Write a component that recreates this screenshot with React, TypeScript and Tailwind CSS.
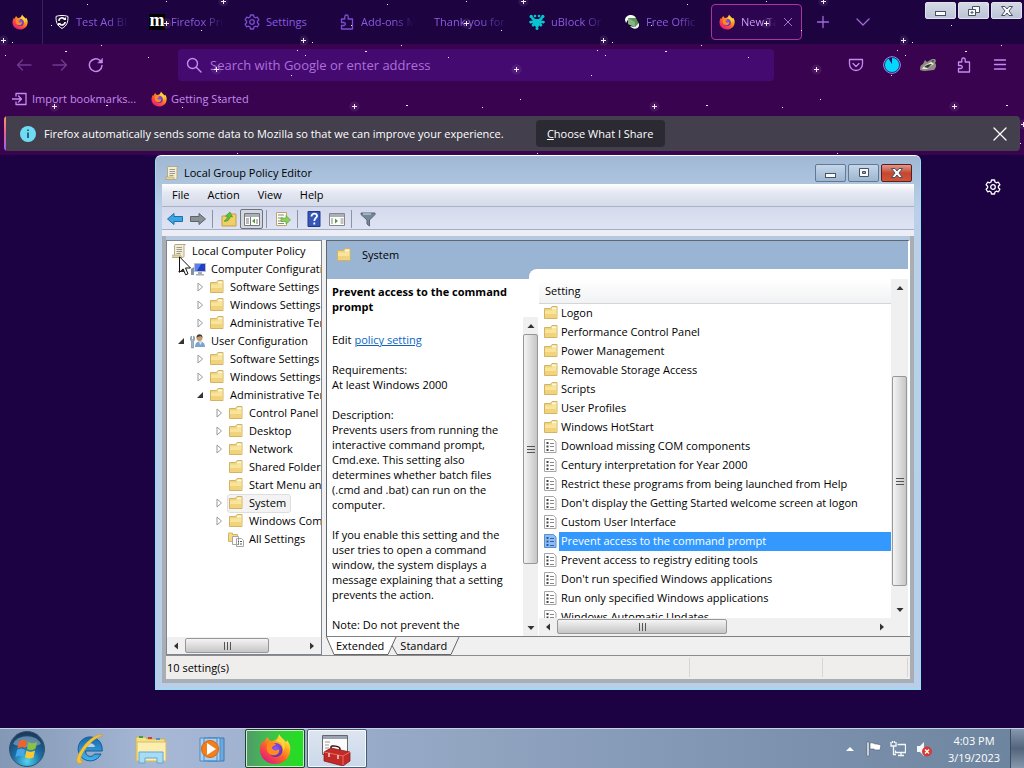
import type { ReactNode } from "react";

/* ---------- Browser icons ---------- */

function FirefoxIcon({ className }: { className: string }) {
  return (
    <svg viewBox="0 0 32 32" className={className} aria-hidden="true">
      <defs>
        <linearGradient id="fx-body" x1="0.85" y1="0.1" x2="0.2" y2="0.95">
          <stop offset="0" stopColor="#fff44f" />
          <stop offset="0.3" stopColor="#ffa41c" />
          <stop offset="0.6" stopColor="#ff5a2c" />
          <stop offset="1" stopColor="#e31587" />
        </linearGradient>
        <radialGradient id="fx-core" cx="0.5" cy="0.4" r="0.6">
          <stop offset="0" stopColor="#9059ff" />
          <stop offset="1" stopColor="#5b2fb5" />
        </radialGradient>
      </defs>
      <path d="M20 1c1 3 5 5 7 8 1 0 1-2 1-2 3 4 4 8 3 12-1 7-7 12-15 12S1 25 1 17c0-4 1-7 3-9l1 2c1-3 2-5 4-6 0 2 1 3 3 4 4 0 7-2 8-7z" fill="url(#fx-body)" />
      <circle cx="16.500" cy="17" r="7" fill="url(#fx-core)" />
      <path d="M9 10c3-2 5 0 8 1-1 2-4 2-4 4 1 3 5 3 7 1 1 5-3 7-7 6-5-1-7-7-4-12z" fill="#ff8a1f" />
      <path d="M17 8c5 1 8 5 7 10 3-3 2-9-1-12-2-1-4 0-6 2z" fill="#ffd23e" />
    </svg>
  );
}

type LineProps = { className: string; children: ReactNode; width?: number };

function Line({ className, children, width = 1.3 }: LineProps) {
  return (
    <svg viewBox="0 0 16 16" fill="none" stroke="currentColor" strokeWidth={width} strokeLinecap="round" strokeLinejoin="round" className={className} aria-hidden="true">
      {children}
    </svg>
  );
}

function GearIcon({ className }: { className: string }) {
  return (
    <Line className={className}>
      <path d="M6.500 1h3l.5 2 1.400.8 2-.6 1.500 2.600-1.500 1.500v1.500l1.500 1.400-1.500 2.600-2-.6-1.400.8-.5 2h-3L6 13l-1.400-.8-2 .6-1.500-2.600 1.500-1.400V7.200L1.100 5.800l1.500-2.600 2 .6L6 3z" />
      <circle cx="8" cy="8" r="2.300" />
    </Line>
  );
}

function PuzzleIcon({ className }: { className: string }) {
  return (
    <Line className={className}>
      <path d="M2.500 5h3.300V2.700a1.700 1.700 0 0 1 3.400 0V5h4.300v10h-11v-3.500h2.300a1.500 1.500 0 0 0 0-3H2.500z" />
    </Line>
  );
}

function CloseIcon({ className }: { className: string }) {
  return (
    <Line className={className}>
      <path d="M2 2l12 12M14 2L2 14" />
    </Line>
  );
}

function ShieldIcon() {
  return (
    <svg viewBox="0 0 16 16" className="size-4" aria-hidden="true">
      <path d="M8 1.500c3 0 5 .5 6 1 0 6-1 9-6 12-5-3-6-6-6-12 1-.5 3-1 6-1z" fill="#1d0b33" stroke="#fff" />
      <path d="M4.800 6.800a3.300 3.300 0 0 1 5.800-1.800M11.200 8a3.300 3.300 0 0 1-5.800 1.800" fill="none" stroke="#fff" strokeWidth="1.700" />
      <path d="M12 3v3H9zM4 12V9h3z" fill="#fff" />
    </svg>
  );
}

function MozillaIcon() {
  return (
    <span className="flex size-4 shrink-0 items-center justify-center bg-black font-['Liberation_Serif',serif] text-lg font-bold leading-none text-white">
      <span className="pb-1">m</span>
    </span>
  );
}

function UblockIcon() {
  return (
    <svg viewBox="0 0 16 16" className="size-4" fill="#08c4cf" aria-hidden="true">
      <path d="M5 3.500L6 5h4l1-1.500 2-.5 1 2-2 1.500 3 .5v2.500l-3-.5 1.500 2L12 13l-1.500-1.500L8 14.500 5.500 11.500 4 13l-1.500-2L4 9l-3 .5V7l3-.5L2 5l1-2z" />
      <circle cx="2.200" cy="2.500" r="1.700" />
      <circle cx="13.800" cy="2.500" r="1.700" />
      <circle cx="6" cy="2" r="1.300" />
      <circle cx="10" cy="2" r="1.300" />
      <circle cx="1.500" cy="8" r="1.300" />
      <circle cx="14.500" cy="8" r="1.300" />
      <circle cx="8" cy="14.500" r="1.500" />
    </svg>
  );
}

function OfficeIcon() {
  return (
    <svg viewBox="0 0 16 16" className="size-4" aria-hidden="true">
      <path d="M1 6c0-3 3-5 6-5 2 0 4 1 5 3L5 4 2 9z" fill="#f5fff5" />
      <path d="M4 4l8 0 3 6-4 3-7-3z" fill="#5b9457" />
      <path d="M4 4l7 4 0 5-7-3z" fill="#86b57f" />
      <path d="M6 12l5 1 4-4v3c-1 3-6 4-9 0z" fill="#f0faee" />
    </svg>
  );
}

const starPoints: [number, number, "dot" | "dash" | "plus"][] = [
  [87, 4, "dot"], [166, 1, "dot"], [223, 1, "plus"], [3, 40, "plus"], [12, 42, "dot"],
  [51, 25, "dot"], [201, 30, "dot"], [166, 23, "plus"], [101, 45, "dot"], [5, 55, "dot"],
  [65, 51, "dash"], [148, 57, "dot"], [297, 50, "dot"], [291, 75, "dot"], [216, 69, "plus"],
  [54, 106, "plus"], [106, 105, "dash"], [182, 107, "dot"], [220, 99, "dot"], [237, 153, "dot"],
  [123, 124, "plus"], [120, 143, "dot"],
];

function StarField() {
  return (
    <svg className="pointer-events-none absolute inset-0 size-full" aria-hidden="true">
      <defs>
        <pattern id="stars" width="300" height="160" patternUnits="userSpaceOnUse">
          {starPoints.map(([x, y, kind]) => (
            <g key={`${x}-${y}`} fill="#f6e8ff">
              {kind === "plus" && <circle cx={x + 0.5} cy={y + 0.5} r="5" opacity="0.08" />}
              {kind === "plus" && <path d={`M${x - 2} ${y}h5v1h-5zM${x} ${y - 2}h1v5h-1z`} />}
              {kind === "dot" && <rect x={x} y={y} width="1" height="1" />}
              {kind === "dash" && <rect x={x} y={y} width="2" height="1" />}
            </g>
          ))}
        </pattern>
      </defs>
      <rect width="100%" height="100%" fill="url(#stars)" />
    </svg>
  );
}

/* ---------- Browser ---------- */

const tabs: { label: string; icon: ReactNode }[] = [
  { label: "Test Ad Bl", icon: <ShieldIcon /> },
  { label: "Firefox Pri", icon: <MozillaIcon /> },
  { label: "Settings", icon: <GearIcon className="size-4 text-[#7a4fd0]" /> },
  { label: "Add-ons M", icon: <PuzzleIcon className="size-4 text-[#7a4fd0]" /> },
  { label: "Thank you for", icon: null },
  { label: "uBlock Or", icon: <UblockIcon /> },
  { label: "Free Offic", icon: <OfficeIcon /> },
];

function CaptionGlyph({ kind, className }: { kind: "min" | "restore" | "max" | "close"; className: string }) {
  return (
    <svg viewBox="0 0 14 12" className={className} fill="#f8fafc" stroke="#475161" aria-hidden="true">
      {kind === "min" && <rect x="1.500" y="6.500" width="10" height="4" />}
      {kind === "restore" && (
        <>
          <path d="M5.500 1.500h7v6h-7z" />
          <path d="M1.500 4.500h7v6h-7z" />
          <path d="M4 7h2v1H4z" />
        </>
      )}
      {kind === "max" && (
        <>
          <path d="M2.500 1.500h9v8h-9z" />
          <path d="M5.500 4.500h3v2h-3z" fill="#8fa9c8" />
        </>
      )}
      {kind === "close" && <path d="M1.500 1.500h3.500L7 4l2-2.500h3.500L9 6l3.500 4.500H9L7 8l-2 2.500H1.500L5 6z" />}
    </svg>
  );
}

function BrowserHeader() {
  const navButton = "flex w-9 items-center justify-center";
  return (
    <header className="relative bg-[#39034f] text-[#c48cf0]">
      <div className="flex h-11 bg-[#1e0341]">
        <button aria-label="Pinned tab" className="flex w-[43px] shrink-0 items-center justify-center border-r border-[#3a2060] pr-0.5">
          <FirefoxIcon className="size-4" />
        </button>
        <div className="flex pl-[3px]" role="tablist">
          {tabs.map((tab) => (
            <button key={tab.label} role="tab" aria-selected="false" className="flex w-[95px] items-center gap-1.5 overflow-hidden pl-2 pr-3 text-[#8a5be0]">
              {tab.icon}
              <span className={`min-w-0 flex-1 overflow-hidden whitespace-nowrap text-left ${tab.label === "Settings" ? "" : "[mask-image:linear-gradient(to_right,black_60%,transparent)]"}`}>
                {tab.label}
              </span>
            </button>
          ))}
          <div className="my-1 flex w-[91px] items-center gap-1.5 rounded border border-[#a8369c] bg-[#2c0450] pl-[7px] pr-1">
            <FirefoxIcon className="size-4 shrink-0" />
            <button role="tab" aria-selected="true" className="w-9 shrink-0 overflow-hidden whitespace-nowrap text-left text-[#c99af5] [mask-image:linear-gradient(to_right,black_55%,transparent)]">
              New Tab
            </button>
            <button aria-label="Close tab" className="text-[#c48cf0]">
              <CloseIcon className="size-2.5" />
            </button>
          </div>
          <button aria-label="New tab" className="ml-px flex w-10 items-center justify-center text-[#a06ad8]">
            <Line className="size-4">
              <path d="M2.500 8h11M8 2.500v11" />
            </Line>
          </button>
          <button aria-label="List all tabs" className="flex w-10 items-center justify-center text-[#a06ad8]">
            <Line className="size-4">
              <path d="M2 5l6 6 6-6" />
            </Line>
          </button>
        </div>
        <div className="ml-auto flex gap-0.5 pr-0.5 pt-0.5">
          {(["min", "restore", "close"] as const).map((kind) => (
            <button key={kind} aria-label={kind} className="flex h-[17px] w-[31px] items-center justify-center rounded-xs border border-[#dfe3ec] bg-linear-to-b from-[#d3d8e4] to-[#bcc5d6]">
              <CaptionGlyph kind={kind} className="h-3 w-3.5" />
            </button>
          ))}
        </div>
      </div>

      <div className="flex h-[42px] items-center pl-1.5">
        <button aria-label="Back" className={`${navButton} text-[#6f3a92]`}>
          <Line className="size-4">
            <path d="M15 8H1.500M6.500 3l-5 5 5 5" />
          </Line>
        </button>
        <button aria-label="Forward" className={`${navButton} text-[#6f3a92]`}>
          <Line className="size-4">
            <path d="M1 8h13.500M9.500 3l5 5-5 5" />
          </Line>
        </button>
        <button aria-label="Reload" className={navButton}>
          <Line className="size-4" width={1.5}>
            <path d="M14 8.500A6.300 6.300 0 1 1 12 3.500L13.500 5" />
            <path d="M14.500 1.500V6H10z" fill="currentColor" strokeWidth="0.500" />
          </Line>
        </button>
        <label className="ml-16 flex h-8 flex-1 items-center gap-2 rounded bg-[#440a70] pl-2">
          <Line className="size-4 shrink-0" width={1.4}>
            <circle cx="6.500" cy="6.500" r="5" />
            <path d="M10.500 10.500l4.500 4.500" />
          </Line>
          <input aria-label="Address" placeholder="Search with Google or enter address" className="min-w-0 flex-1 bg-transparent text-[13px] outline-none placeholder:text-[#ad6fdc]" />
        </label>
        <div className="ml-16 flex pr-1.5">
          <button aria-label="Save to Pocket" className={navButton}>
            <Line className="size-4">
              <path d="M1.500 2.500h13v4.500a6.500 6.500 0 0 1-13 0z" />
              <path d="M5 6.500l3 3 3-3" />
            </Line>
          </button>
          <button aria-label="Privacy extension" className={navButton}>
            <svg viewBox="0 0 18 18" className="size-[18px]" aria-hidden="true">
              <circle cx="9" cy="9" r="8.300" fill="#04d7fb" stroke="#b18cf0" />
              <circle cx="9" cy="9" r="7.500" fill="none" stroke="#1c1260" strokeWidth="0.800" />
              <path d="M9 8L5.500 2.500 9 1.500z" fill="#1c1260" />
            </svg>
          </button>
          <button aria-label="Privacy Badger" className={navButton}>
            <svg viewBox="0 0 18 16" className="h-4 w-[18px]" aria-hidden="true">
              <path d="M1 13c0-4 1-5 3-6l2-4 2 2 5-3 3 0 1 2-1 2c2 2 1 5-1 7-5 0-9 2-14 0z" fill="#8f8d83" />
              <path d="M3 12c2-4 6-5 9-7l3 2c-3 2-5 3-7 5z" fill="#e9e7da" />
              <path d="M5 10c2-2 5-3 8-3l-4 4z" fill="#333" />
              <path d="M12 4l3-1-1 2z" fill="#333" />
            </svg>
          </button>
          <button aria-label="Extensions" className={navButton}>
            <PuzzleIcon className="size-4" />
          </button>
          <button aria-label="Menu" className={navButton}>
            <Line className="size-4">
              <path d="M2.500 3h11M2.500 7.500h11M2.500 12h11" />
            </Line>
          </button>
        </div>
      </div>

      <div className="flex h-[30px] items-start gap-3 pl-3 pt-1">
        <button className="flex items-center gap-1 pt-px">
          <Line className="size-4">
            <path d="M0 8h9M6.500 5L9.500 8l-3 3M4 5V2.500h10v11H4V11" />
          </Line>
          <span className="w-[107px] whitespace-nowrap text-left">Import bookmarks...</span>
        </button>
        <button className="flex items-center gap-1 pt-px">
          <FirefoxIcon className="size-4" />
          Getting Started
        </button>
      </div>
      <StarField />
      <div className="relative mx-1 flex h-[35px] items-center overflow-hidden rounded bg-[#433f4c] text-white">
        <span className="h-full w-0.5 bg-linear-to-b from-[#ff9a5a] via-[#e0609a] to-[#9a5cf0]" />
        <svg viewBox="0 0 16 16" className="ml-3.5 size-4 shrink-0" aria-hidden="true">
          <circle cx="8" cy="8" r="8" fill="#6fdcf5" />
          <path d="M7.200 3.500h1.600v1.600H7.200zM7.200 6.500h1.600v5.500H7.200z" fill="#274456" />
        </svg>
        <p className="ml-2 whitespace-nowrap">Firefox automatically sends some data to Mozilla so that we can improve your experience.</p>
        <button className="ml-8 h-[27px] w-[129px] rounded bg-[#2b2a33] whitespace-nowrap">
          <u>C</u>hoose What I Share
        </button>
        <button aria-label="Dismiss" className="ml-auto mr-3">
          <CloseIcon className="size-4" />
        </button>
      </div>
      <div className="h-1" />
    </header>
  );
}

/* ---------- Policy editor icons ---------- */

function FolderIcon() {
  return (
    <svg viewBox="0 0 16 16" className="size-4 shrink-0" aria-hidden="true">
      <path d="M1.500 3.500h6l1.500-2h5v12h-12.500z" fill="#efd57d" stroke="#d4b366" />
      <path d="M9 2.500h4.500v2H9z" fill="#fdf8e0" />
      <path d="M2 5.500h7l1-1h3.500V13H2z" fill="#f8e49a" />
      <path d="M2 9h11.500v4H2z" fill="#f0d37a" />
    </svg>
  );
}

function PolicyIcon({ selected = false }: { selected?: boolean }) {
  return (
    <svg viewBox="0 0 14 16" className="h-4 w-3.5 shrink-0" aria-hidden="true">
      <path d="M1.500 1.500h9l2.500 2.500v10.500H1.500z" fill={selected ? "#8dbdf2" : "#fff"} stroke={selected ? "#5a8fce" : "#a5a5a5"} />
      <path d="M3.500 4h2v2h-2zM3.500 7.500h2v2h-2zM3.500 11h2v2h-2z" fill={selected ? "#24599b" : "#444"} />
      <path d="M7 5.500h4M7 8.500h4M7 12.500h4" stroke={selected ? "#2f65a8" : "#888"} />
    </svg>
  );
}

function ScrollIcon() {
  return (
    <svg viewBox="0 0 16 16" className="size-4 shrink-0" aria-hidden="true">
      <path d="M4 1.500h10.500c-1 0-1.500 1-1.500 2v9c0 1.500-.5 2-1.500 2H1.500c1 0 2-1 2-2V3z" fill="#f5edcf" stroke="#b5aa88" />
      <path d="M1.500 12h8l1.500 2.500H2z" fill="#e3d5a4" stroke="#a69a77" strokeWidth="0.600" />
      <path d="M5.500 4.500h5.500M5.500 6.500h5.500M5.500 8.500h5.500M5.500 10.500h4" stroke="#9a9a9a" />
    </svg>
  );
}

function ComputerIcon() {
  return (
    <svg viewBox="0 0 16 16" className="size-4 shrink-0" aria-hidden="true">
      <path d="M4.500 2.500h11v8h-11z" fill="#1f3fc4" stroke="#b9bfca" />
      <path d="M5 3h6L7 10H5z" fill="#5d7ff0" />
      <path d="M8 11h4v2H8zM6 13h8v1.500H6z" fill="#a7adb8" />
      <path d="M1 8l3-2v8H1z" fill="#7d93a8" />
    </svg>
  );
}

function UserIcon() {
  return (
    <svg viewBox="0 0 16 16" className="size-4 shrink-0" aria-hidden="true">
      <circle cx="9.500" cy="5" r="3" fill="#c49a6c" />
      <path d="M6.500 4.500c0-4.500 6-4.500 6 0l-2-1.500z" fill="#4b3a2a" />
      <path d="M5 14c0-4 2-5.500 5-5.500s5 2 5 5.500z" fill="#7fa3cc" />
      <path d="M9 9l1.500 3L12 9z" fill="#dbe8f4" />
      <path d="M1.500 3v3l1 1 1-1V3l1 1v3L3.500 8.500V15h-2V8.500L.5 7V4z" fill="#9fb6c9" stroke="#5d7488" strokeWidth="0.500" />
    </svg>
  );
}

function AllSettingsIcon() {
  return (
    <svg viewBox="0 0 16 16" className="size-4 shrink-0" aria-hidden="true">
      <path d="M.5 3.500V2h4v1.500h5v7H.5z" fill="#f3dc87" stroke="#d4b366" />
      <path d="M4.500 5.500h6v8h-6zM8.500 7.500h5l2 2v6h-7z" fill="#fff" stroke="#a5a5a5" />
      <path d="M10 10.500h1M10 13h1M12 10.500h2M12 13h2" stroke="#555" />
    </svg>
  );
}

/* ---------- Policy editor pieces ---------- */

function Arrow({ dir }: { dir: "up" | "down" | "left" | "right" }) {
  const shapes = { up: "M0.500 6L4 2l3.500 4z", down: "M0.500 2L4 6l3.500-4z", left: "M6 0.500L2 4l4 3.500z", right: "M2 0.500L6 4 2 7.500z" };
  return (
    <svg viewBox="0 0 8 8" className="size-2" fill="#333" aria-hidden="true">
      <path d={shapes[dir]} />
    </svg>
  );
}

function VerticalScroll({ thumb }: { thumb: string }) {
  return (
    <div className="flex w-[15px] shrink-0 flex-col items-center bg-[#f0f0f0]">
      <button aria-label="Scroll up" className="flex h-[17px] shrink-0 items-center"><Arrow dir="up" /></button>
      <div className={`flex w-full flex-col items-center justify-center gap-0.5 rounded-xs border border-[#979797] bg-linear-to-r from-[#f4f4f4] to-[#c6c6c6] ${thumb}`}>
        <i className="h-px w-2 bg-[#555]" />
        <i className="h-px w-2 bg-[#555]" />
        <i className="h-px w-2 bg-[#555]" />
      </div>
      <button aria-label="Scroll down" className="mt-auto flex h-[17px] shrink-0 items-center"><Arrow dir="down" /></button>
    </div>
  );
}

function HorizontalScroll({ thumb }: { thumb: string }) {
  return (
    <div className="flex h-[17px] shrink-0 items-center bg-[#f0f0f0]">
      <button aria-label="Scroll left" className="flex w-[18px] justify-center"><Arrow dir="left" /></button>
      <div className={`flex h-[15px] items-center justify-center gap-0.5 rounded-xs border border-[#979797] bg-linear-to-b from-[#f4f4f4] to-[#c6c6c6] ${thumb}`}>
        <i className="h-2 w-px bg-[#555]" />
        <i className="h-2 w-px bg-[#555]" />
        <i className="h-2 w-px bg-[#555]" />
      </div>
      <button aria-label="Scroll right" className="ml-auto flex w-[18px] justify-center"><Arrow dir="right" /></button>
    </div>
  );
}

type TreeNode = { label: string; level: 0 | 1 | 2 | 3; state?: "open" | "closed"; icon?: ReactNode; selected?: boolean };

const tree: TreeNode[] = [
  { label: "Local Computer Policy", level: 0, icon: <ScrollIcon /> },
  { label: "Computer Configuration", level: 1, state: "open", icon: <ComputerIcon /> },
  { label: "Software Settings", level: 2, state: "closed" },
  { label: "Windows Settings", level: 2, state: "closed" },
  { label: "Administrative Templates", level: 2, state: "closed" },
  { label: "User Configuration", level: 1, state: "open", icon: <UserIcon /> },
  { label: "Software Settings", level: 2, state: "closed" },
  { label: "Windows Settings", level: 2, state: "closed" },
  { label: "Administrative Templates", level: 2, state: "open" },
  { label: "Control Panel", level: 3, state: "closed" },
  { label: "Desktop", level: 3, state: "closed" },
  { label: "Network", level: 3, state: "closed" },
  { label: "Shared Folders", level: 3 },
  { label: "Start Menu and Taskbar", level: 3 },
  { label: "System", level: 3, state: "closed", selected: true },
  { label: "Windows Components", level: 3, state: "closed" },
  { label: "All Settings", level: 3, icon: <AllSettingsIcon /> },
];

const indent = { 0: "pl-1", 1: "pl-1", 2: "pl-[23px]", 3: "pl-[42px]" };

function TreePane() {
  return (
    <nav className="flex w-[156px] shrink-0 flex-col overflow-hidden border border-[#7f8590] bg-white">
      <ul role="tree" className="min-h-0 flex-1 overflow-hidden pt-px">
        {tree.map((node, i) => (
          <li key={i} role="treeitem" aria-selected={!!node.selected} className={`flex h-[18px] items-center whitespace-nowrap ${indent[node.level]}`}>
            {node.level > 0 && (
              <span className="flex w-[19px] shrink-0 justify-center">
                {node.state && (
                  <svg viewBox="0 0 8 10" className="h-2.5 w-2" aria-hidden="true">
                    {node.state === "open" ? <path d="M7 2v6H1z" fill="#333" /> : <path d="M2 1l4.500 4L2 9z" fill="#fff" stroke="#999" />}
                  </svg>
                )}
              </span>
            )}
            <span className={`flex h-[17px] items-center gap-[5px] pr-1 ${node.selected ? "rounded-xs bg-[#f3f3f3] outline outline-[#dedede]" : ""}`}>
              {node.icon ?? <FolderIcon />}
              {node.label}
            </span>
          </li>
        ))}
      </ul>
      <HorizontalScroll thumb="w-[84px]" />
    </nav>
  );
}

const settings: { label: string; folder?: boolean }[] = [
  { label: "Logon", folder: true },
  { label: "Performance Control Panel", folder: true },
  { label: "Power Management", folder: true },
  { label: "Removable Storage Access", folder: true },
  { label: "Scripts", folder: true },
  { label: "User Profiles", folder: true },
  { label: "Windows HotStart", folder: true },
  { label: "Download missing COM components" },
  { label: "Century interpretation for Year 2000" },
  { label: "Restrict these programs from being launched from Help" },
  { label: "Don't display the Getting Started welcome screen at logon" },
  { label: "Custom User Interface" },
  { label: "Prevent access to the command prompt" },
  { label: "Prevent access to registry editing tools" },
  { label: "Don't run specified Windows applications" },
  { label: "Run only specified Windows applications" },
  { label: "Windows Automatic Updates" },
];

const selectedSetting = "Prevent access to the command prompt";

function SettingsList() {
  return (
    <div className="flex min-w-0 flex-1 flex-col bg-white pt-2.5">
      <div className="flex min-h-0 flex-1">
        <div className="min-w-0 flex-1 overflow-hidden">
          <table className="w-full border-collapse">
            <thead>
              <tr>
                <th className="h-6 border-b border-[#d5d5d5] bg-linear-to-b from-white to-[#f1f2f4] p-0 pl-1.5 text-left font-normal">Setting</th>
              </tr>
            </thead>
            <tbody>
              {settings.map((row) => {
                const selected = row.label === selectedSetting;
                return (
                  <tr key={row.label} className="h-[19px]">
                    <td className="p-0 pl-1">
                      <div className="flex h-[19px] items-center">
                        <span className="flex w-4 justify-start">{row.folder ? <FolderIcon /> : <PolicyIcon selected={selected} />}</span>
                        <span className={`flex h-[19px] flex-1 items-center whitespace-nowrap pl-0.5 ${selected ? "bg-[#3399ff] text-white" : ""}`}>{row.label}</span>
                      </div>
                    </td>
                  </tr>
                );
              })}
            </tbody>
          </table>
        </div>
        <div className="flex bg-[#f0f0f0] px-px">
          <VerticalScroll thumb="mt-20 h-[210px]" />
        </div>
      </div>
      <div className="flex bg-[#f0f0f0] pb-px pr-[17px]">
        <div className="flex-1">
          <HorizontalScroll thumb="w-[170px]" />
        </div>
      </div>
    </div>
  );
}

function Description() {
  return (
    <div className="flex w-[212px] shrink-0 flex-col">
      <div className="flex h-2.5 shrink-0">
        <div className="flex-1" />
        <div className="w-2.5 rounded-tl-lg bg-white" />
      </div>
      <div className="flex min-h-0 flex-1 flex-col overflow-hidden bg-white pr-px">
        <h2 className="px-[5px] pb-[3px] pt-[5px] font-bold leading-[15px]">
          Prevent access to the command<br />prompt
        </h2>
        <div className="flex min-h-0 flex-1">
          <div className="min-w-0 flex-1 overflow-hidden whitespace-nowrap pl-[5px] pt-[15px] leading-[15px]">
            <p>
              Edit <a href="#policy" className="text-[#0a66c4] underline">policy setting </a>
            </p>
            <p className="mt-[15px]">
              Requirements:<br />At least Windows 2000
            </p>
            <p className="mt-[15px]">
              Description:<br />Prevents users from running the<br />interactive command prompt,<br />Cmd.exe. This setting also<br />determines whether batch files<br />(.cmd and .bat) can run on the<br />computer.
            </p>
            <p className="mt-[15px]">
              If you enable this setting and the<br />user tries to open a command<br />window, the system displays a<br />message explaining that a setting<br />prevents the action.
            </p>
            <p className="mt-[15px]">Note: Do not prevent the</p>
          </div>
          <VerticalScroll thumb="h-[230px]" />
        </div>
      </div>
    </div>
  );
}

function ViewTabs() {
  return (
    <div className="flex h-[19px] shrink-0 items-start border-t border-[#808080] bg-[#f0f0f0]">
      <svg viewBox="0 0 10 18" className="h-[18px] w-2.5" aria-hidden="true">
        <path d="M0 0l8 17.500h2V0z" fill="#fff" />
        <path d="M.5 0L8 17.500h2" fill="none" stroke="#666" />
      </svg>
      <button className="h-[18px] border-b border-[#666] bg-white">Extended</button>
      <svg viewBox="0 0 16 18" className="h-[18px] w-4" aria-hidden="true">
        <path d="M0 0h12L4 17.500H0z" fill="#fff" />
        <path d="M0 17.500h4L12 0M8 8.500l5 9h3" fill="none" stroke="#666" />
      </svg>
      <button className="h-[18px] border-b border-[#666]">Standard</button>
      <svg viewBox="0 0 13 18" className="h-[18px] w-[13px]" aria-hidden="true">
        <path d="M0 17.500h4L12 0" fill="none" stroke="#666" />
      </svg>
    </div>
  );
}

function ToolButton({ label, active = false, children }: { label: string; active?: boolean; children: ReactNode }) {
  return (
    <button aria-label={label} className={`flex h-5 w-[23px] items-center justify-center ${active ? "rounded-xs border border-[#6d7480] bg-[#d3d7df]" : ""}`}>
      <svg viewBox="0 0 16 16" className="size-4" aria-hidden="true">{children}</svg>
    </button>
  );
}

function ToolBar() {
  const divider = "ml-[3px] mr-1 h-[18px] w-px bg-[#8a93a8]";
  return (
    <div className="flex h-[23px] shrink-0 items-center border-b border-[#a3adc3] bg-linear-to-b from-[#d4daec] to-[#dfe4f3] pl-px pt-0.5">
      <ToolButton label="Back"><path d="M.5 8L7 2.500v3h8.500v5H7v3z" fill="#3fa5e2" stroke="#1c6fae" /></ToolButton>
      <ToolButton label="Forward"><path d="M15.500 8L9 2.500v3H.5v5H9v3z" fill="#8b8f96" stroke="#5e6269" /></ToolButton>
      <span className={divider} />
      <ToolButton label="Up one level">
        <path d="M1 5h5l1-2h8v12H1z" fill="#f0cf6b" stroke="#c59f43" />
        <path d="M3 10c2-1 3-2.500 3.500-4.500L4.500 5 9 1l2.500 5-2-.5C8.500 9 6 11 3 10z" fill="#5fbf3a" stroke="#2f8018" strokeWidth="0.500" />
      </ToolButton>
      <ToolButton label="Show console tree" active>
        <path d="M.5 2.500h15v12H.5z" fill="#fff" stroke="#777" />
        <path d="M1 3h14v3H1z" fill="#aab0ba" />
        <path d="M2 8h3M2 10h3M2 12h3M13 8v5" stroke="#777" />
        <path d="M6.500 6v8" stroke="#777" />
        <path d="M11 7.500v5L8 10z" fill="#4fa02d" />
      </ToolButton>
      <span className={divider} />
      <ToolButton label="Export list">
        <path d="M1.500 1.500h10v13h-10z" fill="#fffef5" stroke="#b9a66c" />
        <path d="M3 4h6M3 7h5M3 10h5M3 12.500h6" stroke="#888" />
        <path d="M6 7h5V4.500L15.500 9 11 13v-2.500H6z" fill="#8ed05c" stroke="#4f9c2a" strokeWidth="0.600" />
      </ToolButton>
      <span className={divider} />
      <ToolButton label="Help">
        <path d="M2 .5h12v15H2z" fill="#3457b8" stroke="#203a85" />
        <path d="M5.500 5.500c0-4 5.500-3.500 5.500-.5C11 7 8.300 7 8.300 10M8.300 11.500v2" fill="none" stroke="#fff" strokeWidth="1.800" />
      </ToolButton>
      <ToolButton label="Show action pane">
        <path d="M.5 2.500h15v12H.5z" fill="#fff" stroke="#888" />
        <path d="M1 3h14v3H1z" fill="#aab0ba" />
        <path d="M2 8h2M2 10h2M2 12h2M11.500 8h3M11.500 10h3M11.500 12h3" stroke="#888" />
        <path d="M6 7.500v5L9 10z" fill="#4fa02d" />
      </ToolButton>
      <span className={divider} />
      <ToolButton label="Filter">
        <path d="M1 2h14v1.500L9.500 9v6L7 13V9L1 3.500z" fill="#77879a" stroke="#55657a" />
        <path d="M3 3h8" stroke="#d6e2ee" />
      </ToolButton>
    </div>
  );
}

function PolicyEditor() {
  return (
    <section aria-label="Local Group Policy Editor" className="absolute left-[155px] top-[155px] flex h-[535px] w-[766px] flex-col rounded-t-md border border-[#8fe0f5] border-t-white bg-linear-to-b from-[#a0b8d4] via-[#b9d0e8] via-10% to-[#b7cfe9] px-1.5 pb-1.5 text-black">
      <div className="flex h-7 shrink-0 items-center pl-0.5 pt-1.5">
        <ScrollIcon />
        <h1 className="pl-1">Local Group Policy Editor</h1>
        <div className="ml-auto flex h-[18px] gap-0.5 pr-0.5">
          {(["min", "max"] as const).map((kind) => (
            <button key={kind} aria-label={kind} className="flex w-[31px] items-center justify-center rounded-xs border border-[#64788f] bg-linear-to-b from-[#c4d6ea] to-[#9db6d0]">
              <CaptionGlyph kind={kind} className="h-3 w-3.5" />
            </button>
          ))}
          <button aria-label="close" className="flex w-[31px] items-center justify-center rounded-xs border border-[#5e1c1c] bg-linear-to-b from-[#dd9a8c] via-[#c5462f] via-50% to-[#d0553a]">
            <CaptionGlyph kind="close" className="h-3 w-3.5" />
          </button>
        </div>
      </div>
      <div className="flex h-[23px] shrink-0 items-center gap-[18px] border-b border-[#a9b2c8] bg-linear-to-b from-white via-[#e4e8f2] via-40% to-[#d5dae8] pl-2.5">
        <button>File</button>
        <button>Action</button>
        <button>View</button>
        <button>Help</button>
      </div>
      <ToolBar />
      <div className="h-1.5 shrink-0 bg-[#ecedf5]" />
      <div className="flex min-h-0 flex-1 flex-col border-x-4 border-b-4 border-[#a9adb4] bg-[#f0f0f0]">
        <div className="h-1 shrink-0 bg-[#b4c8e0]" />
        <div className="flex min-h-0 flex-1 gap-1">
          <TreePane />
          <div className="flex min-w-0 flex-1 flex-col">
            <div className="flex min-h-0 flex-1 flex-col border-l border-r-2 border-t border-[#5f6670] border-r-white bg-[#9ab4d3]">
              <div className="flex h-7 shrink-0 items-center gap-2.5 pl-[9px]">
                <FolderIcon />
                System
              </div>
              <div className="flex min-h-0 flex-1">
                <Description />
                <SettingsList />
              </div>
            </div>
            <ViewTabs />
          </div>
        </div>
        <div className="flex h-6 shrink-0 border-t border-[#8c8c8c] bg-[#f0eeed] pl-px leading-6">
          <span className="flex-1">10 setting(s)</span>
          <span className="my-0.5 w-[133px] border-l border-[#d8d6d5]" />
          <span className="my-0.5 mr-0.5 w-[86px] border-x border-[#d8d6d5]" />
        </div>
      </div>
    </section>
  );
}

/* ---------- Taskbar ---------- */

function Taskbar() {
  return (
    <footer className="flex h-10 items-stretch border-t border-[#c5d2e4] bg-linear-to-r from-[#8298b5] via-[#a6b8d5] via-15% to-[#6d849f] text-white">
      <button aria-label="Start" className="flex w-[54px] items-center justify-center">
        <svg viewBox="0 0 38 38" className="size-[38px]" aria-hidden="true">
          <defs>
            <radialGradient id="orb" cx="0.5" cy="0.85" r="0.8">
              <stop offset="0" stopColor="#4fd6f0" />
              <stop offset="0.5" stopColor="#1c6ea6" />
              <stop offset="1" stopColor="#1b3a5c" />
            </radialGradient>
          </defs>
          <circle cx="19" cy="19" r="17.500" fill="url(#orb)" stroke="#34506e" />
          <path d="M5 14a15 12 0 0 1 28 0c-8 4-20 4-28 0z" fill="#b8cfe0" opacity="0.450" />
          <path d="M11 11.500c3-2 5-2 8 0l-1.500 7c-3-2-5-1-8 0z" fill="#f0622a" />
          <path d="M20.500 12c3 2 5 1.500 8.500 0L27.500 18.500c-3 2-6 2-8.500.500z" fill="#8ac43f" />
          <path d="M9 20c3-2 5-2 8 0L15.500 27c-3-2-5-1-8 0z" fill="#45a8ea" />
          <path d="M18.500 20.500c3 2 5 1.500 8.500 0L25.500 27.500c-3 2-6 1-8.500-.5z" fill="#fbc92f" />
        </svg>
      </button>
      <button aria-label="Internet Explorer" className="flex w-[70px] items-center justify-center">
        <svg viewBox="0 0 32 32" className="size-8" aria-hidden="true">
          <defs>
            <linearGradient id="ie" x1="0" y1="0" x2="0" y2="1">
              <stop offset="0" stopColor="#1668ae" />
              <stop offset="1" stopColor="#41b5ee" />
            </linearGradient>
          </defs>
          <path d="M28 21a12 12 0 1 1 1-7l.3 4H12.500c0 6 7 7 9 3z" fill="url(#ie)" stroke="#1a5b99" />
          <path d="M12.500 14c1-5 8.500-5 9.500 0z" fill="#b9cfe6" />
          <path d="M30 3c-4-4-14 3-20 11C5 21 2 28 5 30c1 1 4 0 6-2-3 1-4 0-3-4C10 18 17 9 24 5c3-2 5-2 6-2z" fill="#f6c53b" stroke="#d29a1b" strokeWidth="0.500" />
        </svg>
      </button>
      <button aria-label="Explorer" className="flex w-[54px] items-center justify-center">
        <svg viewBox="0 0 32 32" className="size-8" aria-hidden="true">
          <path d="M1 4h9l2 2h18v22H1z" fill="#f5e08a" stroke="#cbb05a" />
          <path d="M2 9h29v19H2z" fill="#fbeeb0" stroke="#d8bd62" />
          <path d="M4 3h4v2H4z" fill="#3fa049" />
          <path d="M13 4h4v2h-4z" fill="#cf4130" />
          <path d="M21 5h4v2h-4z" fill="#5396cc" />
          <path d="M4 30V19h24v11h-6v-5H10v5z" fill="#a8dcf4" stroke="#5fa8d2" />
        </svg>
      </button>
      <button aria-label="Media Player" className="flex w-[67px] items-center justify-center">
        <svg viewBox="0 0 32 32" className="size-8" aria-hidden="true">
          <path d="M12 5h16v23H12z" fill="#6fa9dc" stroke="#3f79b5" />
          <path d="M8 5h16v23H8zM4 5h17v23H4z" fill="#a9d0f0" stroke="#4e8bc4" />
          <circle cx="14" cy="16" r="8.500" fill="#f07f1c" stroke="#d9640c" />
          <path d="M11 10l9 6-9 6z" fill="#fff" />
        </svg>
      </button>
      <button aria-label="Firefox" className="flex w-[60px] items-center justify-center rounded-xs border border-[#24402c] bg-linear-to-r from-[#4f9a68] via-[#33cf33] via-60% to-[#1fe01f] shadow-[inset_0_0_0_1px_#cdeccd]">
        <FirefoxIcon className="size-8" />
      </button>
      <button aria-label="Local Group Policy Editor" className="ml-0.5 flex w-[60px] items-center justify-center rounded-xs border border-[#4a5a70] bg-linear-to-b from-[#dde5f0] to-[#cbd8ea] shadow-[inset_0_0_0_1px_#f5f9ff]">
        <svg viewBox="0 0 32 34" className="h-[34px] w-8" aria-hidden="true">
          <path d="M1.500 3.500h25v19h-25z" fill="#fbfbfb" stroke="#666" />
          <path d="M2 4h24v3H2z" fill="#9aa2b0" />
          <path d="M4 10h5M4 13h4M4 16h4" stroke="#999" />
          <path d="M10 17v-2c0-2 9-1 9 2v2" fill="none" stroke="#3a1210" strokeWidth="1.500" />
          <path d="M3 20l7-4 19 4v9l-7 5-19-5z" fill="#c22a28" stroke="#7e1513" strokeWidth="0.700" />
          <path d="M3 20l19 4 7-4M22 24v9" fill="none" stroke="#ee6a60" />
          <path d="M8 21v4M17 23v4" stroke="#e9d9c0" strokeWidth="1.500" />
        </svg>
      </button>
      <div className="ml-auto flex items-center">
        <button aria-label="Show hidden icons" className="flex w-6 justify-center">
          <svg viewBox="0 0 10 6" className="h-1.5 w-2.5" fill="#fff" aria-hidden="true"><path d="M5 1l4 4H1z" /></svg>
        </button>
        <button aria-label="Action Center" className="flex w-6 justify-center">
          <svg viewBox="0 0 16 16" className="size-4" fill="#fff" stroke="#4b5c70" strokeWidth="0.600" aria-hidden="true">
            <path d="M1 1h2v14H1zM4 2c3-1 4 1 6 1h1l4 1-1 5H9L8 8H4z" />
          </svg>
        </button>
        <button aria-label="Network" className="flex w-6 justify-center">
          <svg viewBox="0 0 16 16" className="size-4" fill="none" stroke="#f5f8fb" strokeWidth="1.300" aria-hidden="true">
            <path d="M7.500 3.500h8v8h-10v-2M8 14.500h6M11 12v2M1 1v4h5V1M2.500 0v2M4.500 0v2M3.500 5v8.500H6" />
          </svg>
        </button>
        <button aria-label="Volume muted" className="flex w-7 justify-center">
          <svg viewBox="0 0 16 16" className="size-4" aria-hidden="true">
            <path d="M1 5h3l4-4v14l-4-4H1z" fill="#f5f8fb" />
            <circle cx="11" cy="10.500" r="5" fill="#d63a34" />
            <path d="M9 8.500l4 4M13 8.500l-4 4" stroke="#fff" strokeWidth="1.400" />
          </svg>
        </button>
        <div className="w-[72px] text-center leading-[17px]">
          4:03 PM<br />3/19/2023
        </div>
        <button aria-label="Show desktop" className="h-full w-3.5 border-l border-[#3c4d62] bg-linear-to-b from-[#8698ad] via-[#52657c] to-[#8698ad]" />
      </div>
    </footer>
  );
}

export default function App() {
  return (
    <div className="relative flex min-h-screen flex-col bg-[#1c0143] font-['Open_Sans','Noto_Sans',sans-serif] text-[11px] leading-4">
      <BrowserHeader />
      <main className="flex flex-1 justify-end">
        <button aria-label="Customize" className="mr-[23px] mt-6 h-4 text-white">
          <GearIcon className="size-4" />
        </button>
      </main>
      <PolicyEditor />
      <svg viewBox="0 0 12 20" className="pointer-events-none absolute left-[179px] top-[256px] h-5 w-3" aria-hidden="true">
        <path d="M.5.8v15.500l3.600-3.400 2.500 5.900 2.400-1-2.500-5.800h5z" fill="#fff" stroke="#111" />
      </svg>
      <Taskbar />
    </div>
  );
}
